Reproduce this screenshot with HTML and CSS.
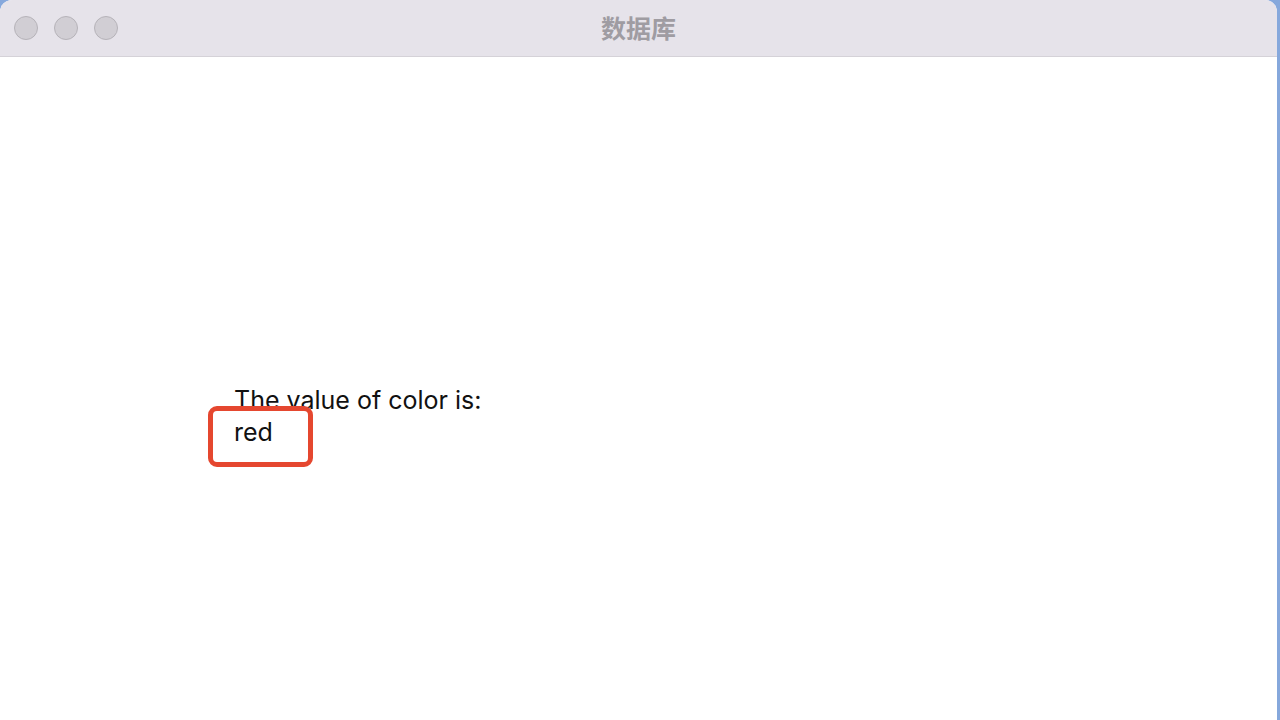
FILE: index.html
```html
<!DOCTYPE html>
<html lang="zh">
<head>
<meta charset="utf-8">
<title>数据库</title>
<link rel="stylesheet" href="styles.css">
</head>
<body>
<div class="window">
  <header class="titlebar">
    <div class="lights">
      <span class="light"></span>
      <span class="light"></span>
      <span class="light"></span>
    </div>
    <div class="title">数据库</div>
  </header>
  <main class="content">
    <div class="output">
      <div class="line">The value of color is:</div>
      <div class="line value">red<span class="highlight"></span></div>
    </div>
  </main>
</div>
</body>
</html>
```

FILE: styles.css
```css
html, body {
  margin: 0;
  padding: 0;
  height: 100%;
}
body {
  background: #86a8dc;
  overflow: hidden;
  font-family: Inter, "Liberation Sans", Arial, sans-serif;
}
.window {
  width: 1277px;
  height: 720px;
  background: #ffffff;
  border-radius: 12px 12px 0 0;
  overflow: hidden;
  display: flex;
  flex-direction: column;
}
.titlebar {
  height: 56px;
  flex: 0 0 56px;
  background: #e6e3ea;
  border-bottom: 1px solid #d5d2d8;
  position: relative;
  display: flex;
  align-items: center;
}
.lights {
  display: flex;
  gap: 16px;
  padding-left: 14px;
}
.light {
  width: 22px;
  height: 22px;
  border-radius: 50%;
  background: #d1ced4;
  border: 1px solid #b6b3b9;
}
.title {
  position: absolute;
  left: 0;
  right: 0;
  top: 0;
  bottom: 0;
  display: flex;
  align-items: center;
  justify-content: center;
  font-family: "Noto Sans CJK SC", sans-serif;
  font-weight: 700;
  font-size: 25px;
  color: #9f9ca2;
  padding-bottom: 2px;
}
.content {
  flex: 1;
  padding: 327px 0 0 234px;
}
.output {
  display: flex;
  flex-direction: column;
}
.line {
  font-size: 25px;
  line-height: 32px;
  color: #111111;
}
.value {
  position: relative;
  align-self: flex-start;
}
.highlight {
  position: absolute;
  box-sizing: border-box;
  left: -26px;
  top: -10px;
  width: 105px;
  height: 61px;
  border: 5px solid #e5472f;
  border-radius: 9px;
}
```
